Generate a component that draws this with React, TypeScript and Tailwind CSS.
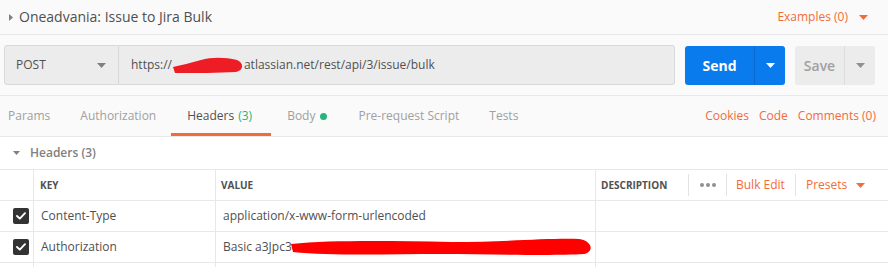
import React from "react";

const Caret = ({ className = "" }: { className?: string }) => (
  <svg width="9" height="5" viewBox="0 0 9 5" className={className}>
    <path d="M0 0 L9 0 L4.5 5 Z" fill="currentColor" />
  </svg>
);

const Check = () => (
  <div className="w-[16px] h-[16px] rounded-[2px] bg-[#333333] flex items-center justify-center">
    <svg width="10" height="8" viewBox="0 0 10 8">
      <path d="M1 4 L3.8 6.6 L9 1.2" stroke="#fff" strokeWidth="1.9" fill="none" strokeLinecap="round" strokeLinejoin="round" />
    </svg>
  </div>
);

export default function App() {
  return (
    <div className="w-[888px] h-[267px] overflow-hidden bg-white text-[#505050]" style={{ fontFamily: '"Open Sans", sans-serif' }}>
      {/* top bar */}
      <div className="h-[35px] bg-[#fafafa] border-b border-[#e8e8e8] flex items-center justify-between pl-[9px] pr-[20px]">
        <div className="flex items-center">
          <svg width="4" height="7" viewBox="0 0 4 7" className="mr-[6px] text-[#808080]">
            <path d="M0 0 L4 3.5 L0 7 Z" fill="currentColor" />
          </svg>
          <span className="text-[14px] leading-none text-[#505050]">Oneadvania: Issue to Jira Bulk</span>
        </div>
        <div className="flex items-center text-[#f26b3a]">
          <span className="text-[12px] leading-none">Examples (0)</span>
          <Caret className="ml-[11px]" />
        </div>
      </div>

      {/* request bar */}
      <div className="bg-[#fafafa] border-b border-[#e8e8e8] pt-[10px] pb-[10px] pl-[4px] pr-[13px] flex items-center">
        <div className="flex h-[40px] w-[671px]">
          <div className="w-[115px] h-full bg-[#ececec] border border-[#d9d9d9] rounded-l-[3px] flex items-center justify-between pl-[11px] pr-[12px]">
            <span className="text-[12px] text-[#505050]">POST</span>
            <Caret className="text-[#808080]" />
          </div>
          <div className="flex-1 h-full bg-[#ececec] border border-l-0 border-[#d9d9d9] rounded-r-[3px] flex items-center pl-[12px] text-[12px] text-[#505050] whitespace-nowrap">
            <span>https://</span>
            <svg width="70" height="17" viewBox="0 0 70 17" className="mx-[1px]">
              <path d="M0 10 C8 8 18 6 28 3 C38 0 52 0 64 3 C71 6 71 13 63 15 C46 16 22 16 2 16 Z" fill="#ee1c24" />
            </svg>
            <span>atlassian.net/rest/api/3/issue/bulk</span>
          </div>
        </div>
        <div className="ml-[10px] flex h-[39px] w-[100px] rounded-[3px] bg-[#097bed] text-white">
          <div className="w-[69px] flex items-center justify-center text-[14px] font-bold">Send</div>
          <div className="w-[31px] border-l border-[#0a6ad0] flex items-center justify-center">
            <Caret />
          </div>
        </div>
        <div className="ml-[10px] flex h-[39px] w-[80px] rounded-[3px] bg-[#ececec] text-[#a0a0a0]">
          <div className="w-[49px] flex items-center justify-center text-[14px] font-semibold">Save</div>
          <div className="w-[31px] border-l border-[#dcdcdc] flex items-center justify-center">
            <Caret className="text-[#909090]" />
          </div>
        </div>
      </div>

      {/* tabs */}
      <div className="h-[41px] bg-[#fafafa] border-b border-[#e8e8e8] flex items-center justify-between pl-[8px] pr-[12px] text-[12px]">
        <div className="flex items-center gap-[30px] h-full text-[#a0a0a0]">
          <span>Params</span>
          <span>Authorization</span>
          <span className="relative h-full flex items-center text-[#505050] ml-[1px]">
            Headers<span className="ml-[4px] text-[#26b47f]">(3)</span>
            <span className="absolute left-[-16px] right-[-19px] bottom-[0px] h-[3px] bg-[#f26b3a]" />
          </span>
          <span className="flex items-center ml-[5px]">
            Body<span className="ml-[5px] w-[7px] h-[7px] rounded-full bg-[#26b47f]" />
          </span>
          <span className="ml-[1px]">Pre-request Script</span>
          <span>Tests</span>
        </div>
        <div className="flex items-center gap-[10px] text-[#f26b3a]">
          <span>Cookies</span>
          <span>Code</span>
          <span>Comments (0)</span>
        </div>
      </div>

      {/* headers section title */}
      <div className="h-[33px] border-b border-[#e8e8e8] flex items-center pl-[13px]">
        <svg width="7" height="4" viewBox="0 0 7 4" className="text-[#808080] mr-[10px]">
          <path d="M0 0 L7 0 L3.5 4 Z" fill="currentColor" />
        </svg>
        <span className="text-[12px] font-semibold text-[#808080]">Headers (3)</span>
      </div>

      {/* table */}
      <div className="text-[12px]">
        <div className="h-[31px] border-b border-[#e8e8e8] flex">
          <div className="w-[34px] border-r border-[#e8e8e8]" />
          <div className="w-[182px] border-r border-[#e8e8e8] flex items-center pl-[6px] text-[10px] font-bold text-[#505050]">KEY</div>
          <div className="w-[380px] border-r border-[#e8e8e8] flex items-center pl-[5px] text-[10px] font-bold text-[#505050]">VALUE</div>
          <div className="flex-1 flex items-center pl-[5px]">
            <span className="w-[87px] text-[10px] font-bold text-[#505050]">DESCRIPTION</span>
            <div className="h-[22px] border-l border-[#e3e3e3] w-[38px] flex items-center justify-center gap-[2px]">
              <span className="w-[4px] h-[4px] rounded-full bg-[#909090]" />
              <span className="w-[4px] h-[4px] rounded-full bg-[#909090]" />
              <span className="w-[4px] h-[4px] rounded-full bg-[#909090]" />
            </div>
            <div className="h-[22px] border-l border-[#e3e3e3] w-[69px] flex items-center pl-[9px] text-[#f26b3a] text-[12px]">Bulk Edit</div>
            <div className="h-[22px] border-l border-[#e3e3e3] flex items-center pl-[10px] text-[#f26b3a] text-[12px]">
              Presets
              <Caret className="ml-[9px]" />
            </div>
          </div>
        </div>
        {[
          { k: "Content-Type", v: <span>application/x-www-form-urlencoded</span> },
          {
            k: "Authorization",
            v: (
              <span className="flex items-center whitespace-nowrap">
                Basic a3Jpc3
                <svg width="302" height="20" viewBox="0 0 302 20" className="-ml-[1px]">
                  <path d="M0 7 C40 3 100 4 160 5 C215 5 255 1 288 2 C302 4 303 15 293 17 C260 19 200 17 150 17 C100 17 40 19 2 15 Z" fill="#ff0000" />
                </svg>
              </span>
            ),
          },
        ].map((r) => (
          <div key={r.k} className="h-[31px] border-b border-[#e8e8e8] flex">
            <div className="w-[34px] border-r border-[#e8e8e8] flex items-center pl-[13px]">
              <Check />
            </div>
            <div className="w-[182px] border-r border-[#e8e8e8] flex items-center pl-[7px]">{r.k}</div>
            <div className="w-[380px] border-r border-[#e8e8e8] flex items-center pl-[7px]">{r.v}</div>
            <div className="flex-1" />
          </div>
        ))}
        <div className="h-[10px] flex">
          <div className="w-[34px] border-r border-[#e8e8e8]" />
          <div className="w-[182px] border-r border-[#e8e8e8]" />
          <div className="w-[380px] border-r border-[#e8e8e8]" />
        </div>
      </div>
    </div>
  );
}
